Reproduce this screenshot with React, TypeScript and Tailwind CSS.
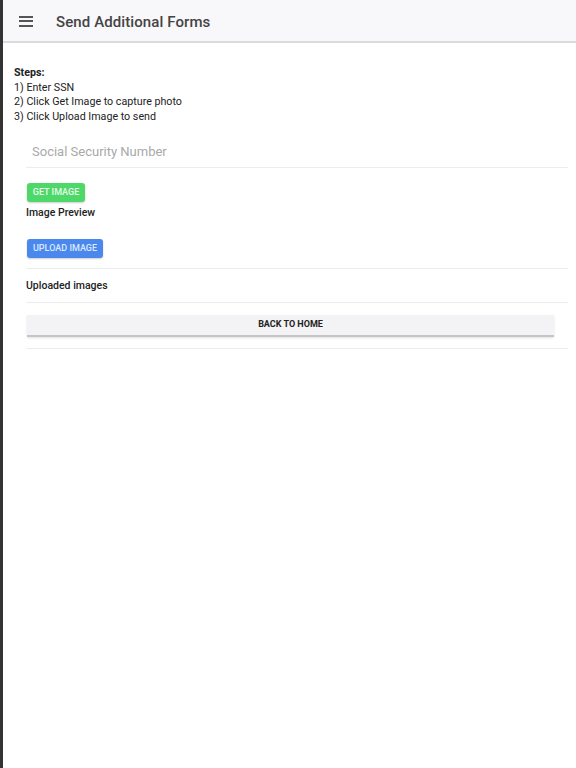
import React from 'react';

export default function App() {
  return (
    <div className="flex min-h-screen bg-white" style={{ fontFamily: 'Roboto, "Noto Sans", sans-serif' }}>
      {/* window edge */}
      <div className="w-[3px] shrink-0 bg-[#333333]" />

      <div className="flex-1">
        {/* Header */}
        <div className="h-[43px] bg-[#f8f7f9] border-b-2 border-[#dcdadd] flex items-center">
          <div className="ml-[16px] mt-[1px] w-[14px] flex flex-col gap-[2.5px]">
            <span className="h-[2px] bg-[#555]" />
            <span className="h-[2px] bg-[#555]" />
            <span className="h-[2px] bg-[#555]" />
          </div>
          <h1 className="ml-[23px] mt-[3px] text-[15px] font-medium text-[#444] tracking-[0.1px]">Send Additional Forms</h1>
        </div>

        {/* Steps */}
        <div className="pt-[23px] pl-[11px] text-[10.7px] leading-[14.5px] text-[#222]">
          <p className="font-bold">Steps:</p>
          <p>1) Enter SSN</p>
          <p>2) Click Get Image to capture photo</p>
          <p>3) Click Upload Image to send</p>
        </div>

        {/* Form */}
        <div className="ml-[23px] mr-[8px] mt-[13px]">
          <div className="h-[31px] border-b border-[#ececec] flex items-center pl-[6px]">
            <input
              className="w-full outline-none text-[13px] text-[#333] placeholder:text-[#a9a9a9] bg-transparent"
              placeholder="Social Security Number"
            />
          </div>

          <button className="mt-[15px] ml-px h-[19px] w-[58px] rounded-[3px] bg-[#4fd86a] text-[9px] font-medium text-[#e6fbe9] shadow-[0_1px_2px_rgba(0,0,0,0.2)]">
            GET IMAGE
          </button>
          <p className="mt-[4px] text-[10.5px] leading-[14px] font-medium text-[#222]">Image Preview</p>

          <button className="mt-[19px] ml-px h-[19px] w-[76px] rounded-[3px] bg-[#4a88ee] text-[9px] font-medium text-[#dce8ff] shadow-[0_1px_2px_rgba(0,0,0,0.2)]">
            UPLOAD IMAGE
          </button>

          <div className="mt-[10px] border-b border-[#ececec]" />
          <div className="h-[33px] flex items-center text-[10.5px] font-medium text-[#222]">Uploaded images</div>
          <div className="border-b border-[#ececec]" />

          <button className="mt-[12px] ml-px mr-[14px] w-[calc(100%-15px)] h-[22px] bg-[#f3f2f4] border-b-2 border-[#c6c5c8] shadow-[0_1px_2px_rgba(0,0,0,0.12)] text-[9px] font-bold text-[#222]">
            BACK TO HOME
          </button>
          <div className="mt-[11px] border-b border-[#ececec]" />
        </div>
      </div>
    </div>
  );
}
